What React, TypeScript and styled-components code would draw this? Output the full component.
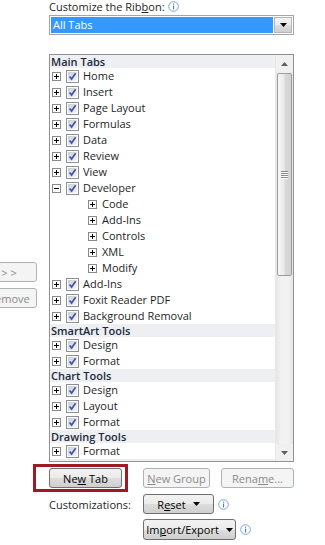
import React from "react";
import styled, { createGlobalStyle } from "styled-components";

const GlobalStyle = createGlobalStyle`
  html, body {
    margin: 0;
    padding: 0;
    background: #fff;
  }
  body {
    font-family: "Open Sans", "Noto Sans", sans-serif;
    font-size: 11px;
    color: #1e1e1e;
    overflow: hidden;
  }
`;

type Row =
  | { kind: "group"; label: string }
  | { kind: "tab"; label: string; open?: boolean }
  | { kind: "sub"; label: string };

const rows: Row[] = [
  { kind: "group", label: "Main Tabs" },
  { kind: "tab", label: "Home" },
  { kind: "tab", label: "Insert" },
  { kind: "tab", label: "Page Layout" },
  { kind: "tab", label: "Formulas" },
  { kind: "tab", label: "Data" },
  { kind: "tab", label: "Review" },
  { kind: "tab", label: "View" },
  { kind: "tab", label: "Developer", open: true },
  { kind: "sub", label: "Code" },
  { kind: "sub", label: "Add-Ins" },
  { kind: "sub", label: "Controls" },
  { kind: "sub", label: "XML" },
  { kind: "sub", label: "Modify" },
  { kind: "tab", label: "Add-Ins" },
  { kind: "tab", label: "Foxit Reader PDF" },
  { kind: "tab", label: "Background Removal" },
  { kind: "group", label: "SmartArt Tools" },
  { kind: "tab", label: "Design" },
  { kind: "tab", label: "Format" },
  { kind: "group", label: "Chart Tools" },
  { kind: "tab", label: "Design" },
  { kind: "tab", label: "Layout" },
  { kind: "tab", label: "Format" },
  { kind: "group", label: "Drawing Tools" },
  { kind: "tab", label: "Format" },
  { kind: "group", label: "Picture Tools" },
];

const InfoIcon = () => (
  <svg width="11" height="11" viewBox="0 0 11 11">
    <circle cx="5.5" cy="5.5" r="4.8" fill="#fff" stroke="#7ba4d9" />
    <rect x="5" y="2.6" width="1.1" height="1.1" fill="#3f7dc8" />
    <rect x="5" y="4.6" width="1.1" height="3.8" fill="#3f7dc8" />
  </svg>
);

const Expander = ({ open }: { open?: boolean }) => (
  <svg width="9" height="9" viewBox="0 0 9 9">
    <rect x="0.5" y="0.5" width="8" height="8" fill="#fff" stroke="#8a8a8a" />
    <path d="M2 4.5h5" stroke="#000" />
    {!open && <path d="M4.5 2v5" stroke="#000" />}
  </svg>
);

const CheckBox = () => (
  <svg width="13" height="13" viewBox="0 0 13 13">
    <defs>
      <linearGradient id="cbfill" x1="0" y1="0" x2="1" y2="1">
        <stop offset="0" stopColor="#c9ced6" />
        <stop offset="1" stopColor="#f4f6f9" />
      </linearGradient>
    </defs>
    <rect x="0.5" y="0.5" width="12" height="12" fill="#fff" stroke="#8e8f8f" />
    <rect x="2" y="2" width="9" height="9" fill="url(#cbfill)" />
    <path d="M3.6 6.4 L5.6 9 L9.6 3.2" fill="none" stroke="#4157a5" strokeWidth="1.7" />
  </svg>
);

const DownTriangle = ({ color = "#000" }: { color?: string }) => (
  <svg width="7" height="4" viewBox="0 0 7 4">
    <path d="M0 0h7L3.5 4z" fill={color} />
  </svg>
);

const UpTriangle = ({ color = "#606060" }: { color?: string }) => (
  <svg width="7" height="4" viewBox="0 0 7 4">
    <path d="M0 4h7L3.5 0z" fill={color} />
  </svg>
);

export default function App() {
  return (
    <>
      <GlobalStyle />
      <Page>
        <SideColumn>
          <SideButton disabled>&gt; &gt;</SideButton>
          <SideButton disabled>Remove</SideButton>
        </SideColumn>

        <MainColumn>
          <Label>
            <span>
              Customize the Rib<Key>b</Key>on:
            </span>
            <InfoIcon />
          </Label>

          <Combo>
            <ComboValue>All Tabs</ComboValue>
            <ComboArrow>
              <DownTriangle />
            </ComboArrow>
          </Combo>

          <ListBox>
            <Tree>
              {rows.map((row, i) => {
                if (row.kind === "group") {
                  return <GroupRow key={i}>{row.label}</GroupRow>;
                }
                if (row.kind === "sub") {
                  return (
                    <ItemRow key={i} $indent={38}>
                      <Expander />
                      <ItemText $gap={5}>{row.label}</ItemText>
                    </ItemRow>
                  );
                }
                return (
                  <ItemRow key={i} $indent={2}>
                    <Expander open={row.open} />
                    <CheckSlot>
                      <CheckBox />
                    </CheckSlot>
                    <ItemText $gap={4}>{row.label}</ItemText>
                  </ItemRow>
                );
              })}
            </Tree>
            <ScrollBar>
              <ScrollArrow>
                <UpTriangle />
              </ScrollArrow>
              <Track>
                <Thumb>
                  <Grip>
                    <span />
                    <span />
                    <span />
                    <span />
                  </Grip>
                </Thumb>
              </Track>
              <ScrollArrow>
                <DownTriangle color="#606060" />
              </ScrollArrow>
            </ScrollBar>
          </ListBox>

          <ButtonRow>
            <Highlight>
              <Button $width={73}>
                <span>
                  Ne<Key>w</Key> Tab
                </span>
              </Button>
            </Highlight>
            <Button $width={67} $left={21} disabled>
              <span>
                <Key>N</Key>ew Group
              </span>
            </Button>
            <Button $width={73} $left={11} disabled>
              <span>
                Rena<Key>m</Key>e...
              </span>
            </Button>
          </ButtonRow>

          <OptionGrid>
            <OptionLabel>Customizations:</OptionLabel>
            <OptionCell>
              <Button $width={71}>
                <span>
                  R<Key>e</Key>set
                </span>
                <DownTriangle />
              </Button>
              <InfoIcon />
            </OptionCell>
            <span />
            <OptionCell>
              <Button $width={93} $height={21}>
                <span>
                  Im<Key>p</Key>ort/Export
                </span>
                <DownTriangle />
              </Button>
              <InfoIcon />
            </OptionCell>
          </OptionGrid>
        </MainColumn>
      </Page>
    </>
  );
}

const Page = styled.div`
  display: flex;
  width: 325px;
  height: 545px;
  overflow: hidden;
`;

const SideColumn = styled.div`
  width: 37px;
  flex-shrink: 0;
  overflow: hidden;
  display: flex;
  flex-direction: column;
  align-items: flex-end;
  gap: 6px;
  padding-top: 262px;
`;

const SideButton = styled.button`
  flex-shrink: 0;
  width: 56px;
  height: 20px;
  padding: 0;
  border: 1px solid #adb2b5;
  border-radius: 3px;
  background: #f4f4f4;
  color: #8a8a8a;
  font-family: inherit;
  font-size: 11px;
  white-space: nowrap;
`;

const MainColumn = styled.div`
  width: 245px;
  margin-left: 12px;
  flex-shrink: 0;
  display: flex;
  flex-direction: column;
`;

const Label = styled.div`
  display: flex;
  align-items: center;
  gap: 3px;
  height: 15px;
  line-height: 15px;
  margin-top: -1px;
  white-space: nowrap;
`;

const Key = styled.span`
  text-decoration: underline;
  text-underline-offset: 1px;
`;

const Combo = styled.div`
  box-sizing: border-box;
  height: 20px;
  margin-top: 1px;
  border: 1px solid #a5a5a5;
  padding: 1px;
  display: flex;
  gap: 1px;
  background: #fff;
`;

const ComboValue = styled.div`
  flex: 1;
  background: #3399ff;
  color: #fff;
  line-height: 16px;
  padding-left: 2px;
`;

const ComboArrow = styled.div`
  box-sizing: border-box;
  width: 18px;
  display: flex;
  align-items: center;
  justify-content: center;
  border: 1px solid #b5b5b5;
  background: linear-gradient(#f2f2f2 0%, #ebebeb 50%, #dddddd 51%, #cfcfcf 100%);
`;

const ListBox = styled.div`
  box-sizing: border-box;
  height: 408px;
  margin-top: 19px;
  border: 1px solid #8f9399;
  display: flex;
  overflow: hidden;
`;

const Tree = styled.div`
  flex: 1;
  overflow: hidden;
  display: flex;
  flex-direction: column;
`;

const GroupRow = styled.div`
  flex-shrink: 0;
  height: 13px;
  line-height: 13px;
  padding-left: 1px;
  background: #eeeff2;
  font-weight: 600;
  color: #1b2a3d;
  white-space: nowrap;
`;

const ItemRow = styled.div<{ $indent: number }>`
  flex-shrink: 0;
  height: 16px;
  display: flex;
  align-items: center;
  padding-left: ${(p) => p.$indent}px;
  white-space: nowrap;

  svg {
    flex-shrink: 0;
    display: block;
  }
`;

const CheckSlot = styled.span`
  display: flex;
  margin-left: 5px;
`;

const ItemText = styled.span<{ $gap: number }>`
  margin-left: ${(p) => p.$gap}px;
  line-height: 16px;
`;

const ScrollBar = styled.div`
  width: 17px;
  flex-shrink: 0;
  display: flex;
  flex-direction: column;
  background: #f0f0f0;
  border-left: 1px solid #e9e9e9;
`;

const ScrollArrow = styled.div`
  height: 17px;
  flex-shrink: 0;
  display: flex;
  align-items: center;
  justify-content: center;
`;

const Track = styled.div`
  flex: 1;
  padding-top: 1px;
  background: linear-gradient(to right, #e6e6e6, #f2f2f2 30%, #f2f2f2 70%, #e6e6e6);
`;

const Thumb = styled.div`
  box-sizing: border-box;
  height: 203px;
  margin: 0 1px;
  border: 1px solid #9b9b9b;
  border-radius: 2px;
  background: linear-gradient(to right, #f7f7f7, #ebebeb 45%, #d9d9d9 55%, #d2d2d2);
  display: flex;
  align-items: center;
  justify-content: center;
`;

const Grip = styled.div`
  display: flex;
  flex-direction: column;
  gap: 1px;

  span {
    display: block;
    width: 7px;
    height: 1px;
    background: #8a8a8a;
    box-shadow: 0 1px 0 #fff;
  }
`;

const ButtonRow = styled.div`
  display: flex;
  align-items: center;
  margin-top: 6px;
`;

const Highlight = styled.div`
  position: relative;
  display: flex;

  &::after {
    content: "";
    position: absolute;
    top: -4px;
    bottom: -4px;
    left: -16px;
    right: -6px;
    border: 3px solid #a01a22;
    pointer-events: none;
  }
`;

const Button = styled.button<{ $width: number; $left?: number; $height?: number }>`
  box-sizing: border-box;
  width: ${(p) => p.$width}px;
  height: ${(p) => p.$height ?? 20}px;
  margin-left: ${(p) => p.$left ?? 0}px;
  padding: 0;
  display: flex;
  align-items: center;
  justify-content: center;
  gap: 7px;
  border: 1px solid #707070;
  border-radius: 3px;
  background: linear-gradient(#f2f2f2 0%, #ebebeb 50%, #dddddd 51%, #cfcfcf 100%);
  color: #000;
  font-family: inherit;
  font-size: 11px;
  white-space: nowrap;

  &:disabled {
    border-color: #adb2b5;
    background: #f4f4f4;
    color: #8a8a8a;
  }
`;

const OptionGrid = styled.div`
  display: grid;
  grid-template-columns: 94px auto;
  row-gap: 5px;
  margin-top: 6px;
  align-items: center;
`;

const OptionLabel = styled.span`
  white-space: nowrap;
`;

const OptionCell = styled.div`
  display: flex;
  align-items: center;
  gap: 4px;
`;
